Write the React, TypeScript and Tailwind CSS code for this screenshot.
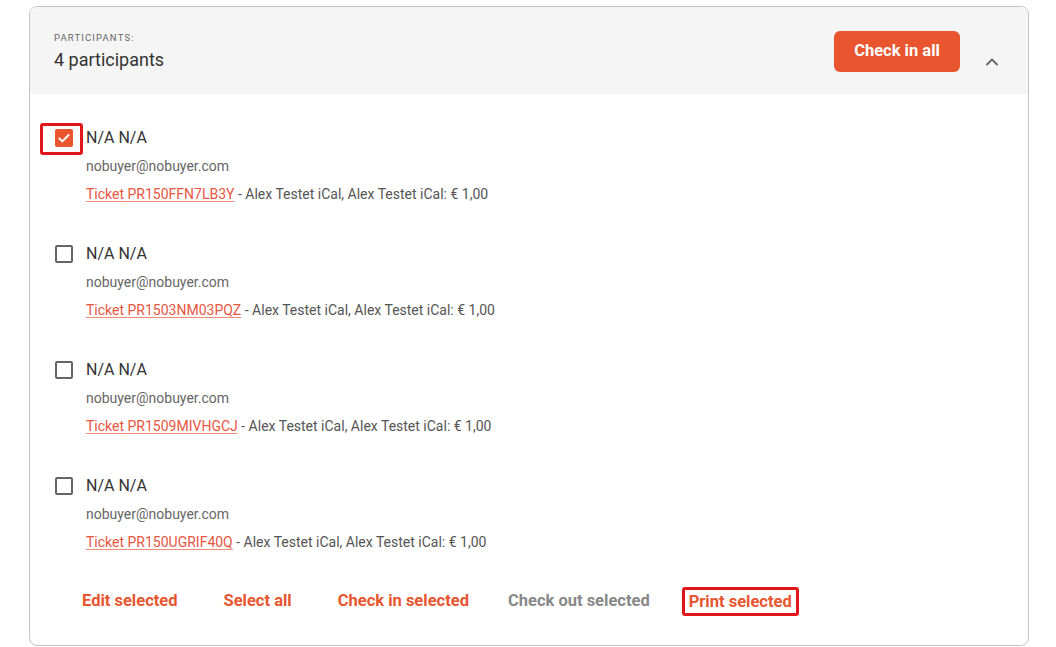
import { ChevronUp } from 'lucide-react';

const participants = [
  { ticket: 'PR150FFN7LB3Y', checked: true },
  { ticket: 'PR1503NM03PQZ', checked: false },
  { ticket: 'PR1509MIVHGCJ', checked: false },
  { ticket: 'PR150UGRIF40Q', checked: false },
];

function Checkbox({ checked }: { checked: boolean }) {
  if (checked) {
    return (
      <div className="w-[18px] h-[18px] rounded-[2px] bg-[#e8552f] flex items-center justify-center">
        <svg width="16" height="16" viewBox="0 0 24 24" fill="none" stroke="white" strokeWidth="3" strokeLinecap="round" strokeLinejoin="round">
          <path d="M5 12.5l4.5 4.5L19 7.5" />
        </svg>
      </div>
    );
  }
  return <div className="w-[18px] h-[18px] rounded-[2px] border-2 border-[#666]" />;
}

export default function App() {
  return (
    <div className="min-h-[647px] bg-white pl-[29px] pt-[6px]" style={{ fontFamily: 'Roboto, "Liberation Sans", sans-serif' }}>
      <div className="w-[1000px] h-[640px] border border-[#c4c4c4] rounded-[8px] overflow-hidden">
        {/* Header */}
        <div className="h-[87px] bg-[#f5f5f5] flex items-center pl-[24px] pr-[26px]">
          <div className="flex-1 pt-[2px]">
            <p className="text-[9.5px] tracking-[0.12em] text-[#666] uppercase leading-[12px]">Participants:</p>
            <p className="text-[18px] text-[#333] leading-[24px] mt-[4px]">4 participants</p>
          </div>
          <button className="mt-[1px] h-[41px] w-[126px] rounded-[6px] bg-[#e8552f] text-white font-bold text-[16.5px]">Check in all</button>
          <ChevronUp size={20} strokeWidth={2.2} className="text-[#666] ml-[22px] mt-[22px]" />
        </div>

        {/* Rows */}
        <div className="pt-[30px] pl-[25px]">
          {participants.map(p => (
            <div key={p.ticket} className="flex mb-[32px]">
              <div className="relative w-[18px] h-[18px] mt-[5px]">
                <Checkbox checked={p.checked} />
                {p.checked && (
                  <div className="absolute left-[-15px] top-[-6px] w-[43px] h-[32px] border-[3px] border-[#e0161b] rounded-[3px]" />
                )}
              </div>
              <div className="ml-[13px]">
                <p className="text-[16px] leading-[28px] text-[#333]">N/A N/A</p>
                <p className="text-[14px] leading-[28px] text-[#666]">nobuyer@nobuyer.com</p>
                <p className="text-[14px] leading-[28px] text-[#555]">
                  <a className="text-[#e8553f] underline decoration-[#f08a78] underline-offset-2">Ticket {p.ticket}</a>
                  {' '}- Alex Testet iCal, Alex Testet iCal: € 1,00
                </p>
              </div>
            </div>
          ))}
        </div>

        {/* Actions */}
        <div className="flex items-center h-[28px] mt-[-1px] text-[16.5px] font-bold leading-[28px]">
          <span className="ml-[52px] text-[#e8552f]">Edit selected</span>
          <span className="ml-[46px] text-[#e8552f]">Select all</span>
          <span className="ml-[46px] text-[#e8552f]">Check in selected</span>
          <span className="ml-[39px] text-[#888]">Check out selected</span>
          <span className="ml-[32px] border-[3px] border-[#e0161b] rounded-[3px] px-[4px] leading-[23px] text-[#e8552f]">Print selected</span>
        </div>
      </div>
    </div>
  );
}
